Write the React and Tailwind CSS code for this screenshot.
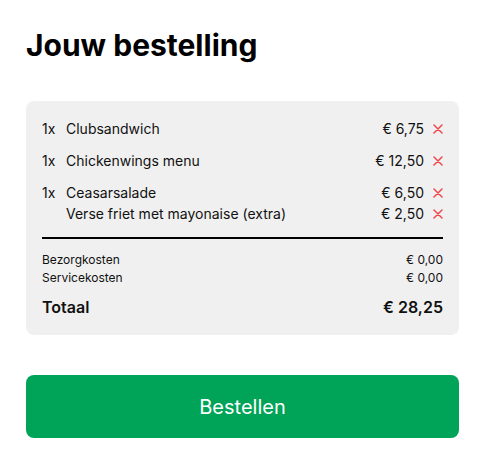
import React from "react";

const items = [
  { qty: "1x", name: "Clubsandwich", price: "€ 6,75", extras: [] },
  { qty: "1x", name: "Chickenwings menu", price: "€ 12,50", extras: [] },
  {
    qty: "1x",
    name: "Ceasarsalade",
    price: "€ 6,50",
    extras: [{ name: "Verse friet met mayonaise (extra)", price: "€ 2,50" }],
  },
];

const RemoveIcon = () => (
  <svg width="10" height="10" viewBox="0 0 10 10" className="ml-[9px] shrink-0">
    <path d="M1 1L9 9M9 1L1 9" stroke="#f0474f" strokeWidth="1.5" strokeLinecap="round" />
  </svg>
);

const Line = ({ qty, name, price }) => (
  <div className="flex items-center leading-[21px] text-[14px] text-[#111]">
    <span className="w-6 shrink-0">{qty}</span>
    <span className="flex-1">{name}</span>
    <span>{price}</span>
    <RemoveIcon />
  </div>
);

const App = () => {
  return (
    <div className="min-h-screen bg-white px-[26px] pt-[25px] font-['Inter',sans-serif] text-[#111]">
      <h1 className="text-[30px] font-bold leading-[40px] text-black">Jouw bestelling</h1>

      {/* Order card */}
      <div className="mt-[36px] w-[433px] rounded-lg bg-[#f0f0f0] px-4 pt-[17px] pb-4">
        <div className="flex flex-col gap-[11px]">
          {items.map((item) => (
            <div key={item.name}>
              <Line qty={item.qty} name={item.name} price={item.price} />
              {item.extras.map((extra) => (
                <Line key={extra.name} qty="" name={extra.name} price={extra.price} />
              ))}
            </div>
          ))}
        </div>

        <div className="mt-[13px] h-[2px] bg-black" />

        <div className="mt-[12px] text-[12px] leading-[18px]">
          <div className="flex justify-between">
            <span>Bezorgkosten</span>
            <span>€ 0,00</span>
          </div>
          <div className="flex justify-between">
            <span>Servicekosten</span>
            <span>€ 0,00</span>
          </div>
        </div>

        <div className="mt-[8px] flex justify-between text-[16px] font-semibold leading-6">
          <span>Totaal</span>
          <span>€ 28,25</span>
        </div>
      </div>

      <button className="mt-[40px] h-[63px] w-[433px] rounded-lg bg-[#00a458] text-[20px] font-normal text-white">
        Bestellen
      </button>
    </div>
  );
};

export default App;
